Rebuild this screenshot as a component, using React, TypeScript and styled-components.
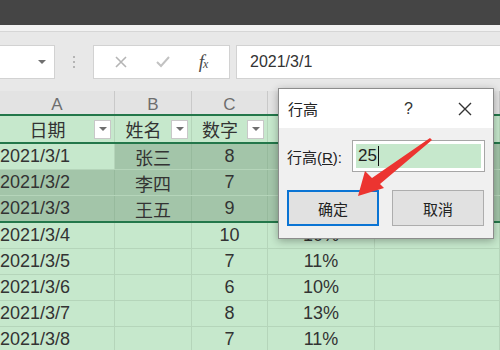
import styled, { createGlobalStyle } from 'styled-components';

const GlobalStyle = createGlobalStyle`
  html, body {
    margin: 0;
    padding: 0;
    width: 500px;
    height: 350px;
    overflow: hidden;
    background: #c6e8cc;
    font-family: "Liberation Sans", "Noto Sans CJK SC", sans-serif;
  }
`;

const Page = styled.div`
  position: relative;
  width: 500px;
  height: 350px;
  overflow: hidden;
  display: flex;
  flex-direction: column;
`;

const TopBar = styled.div`
  height: 25px;
  background: #454545;
  flex-shrink: 0;
`;

const Strip = styled.div`
  height: 6px;
  background: #f2f2f2;
  border-bottom: 1px solid #d6d6d6;
  flex-shrink: 0;
`;

const FormulaBar = styled.div`
  height: 59px;
  background: #e8e8e8;
  display: flex;
  align-items: center;
  flex-shrink: 0;
`;

const NameBox = styled.div`
  width: 55px;
  height: 34px;
  box-sizing: border-box;
  background: #fff;
  border: 1px solid #d2d2d2;
  border-left: none;
  display: flex;
  align-items: center;
  justify-content: flex-end;
  padding-right: 8px;
`;

const Caret = styled.span`
  width: 0;
  height: 0;
  border-left: 4px solid transparent;
  border-right: 4px solid transparent;
  border-top: 4px solid #6f6f6f;
`;

const Dots = styled.div`
  width: 38px;
  display: flex;
  flex-direction: column;
  align-items: center;
  gap: 3px;
  span {
    width: 2px;
    height: 2px;
    background: #b4b4b4;
  }
`;

const FuncBox = styled.div`
  width: 137px;
  height: 34px;
  box-sizing: border-box;
  background: #fff;
  border: 1px solid #d2d2d2;
  display: flex;
  align-items: center;
  justify-content: space-around;
  padding: 0 8px 0 6px;
`;

const Fx = styled.span`
  font-family: "Liberation Serif", serif;
  font-style: italic;
  font-size: 19px;
  color: #4a4a4a;
  letter-spacing: -1px;
  sub {
    font-size: 12px;
    vertical-align: baseline;
  }
`;

const FormulaInput = styled.div`
  flex: 1;
  margin-left: 6px;
  height: 34px;
  box-sizing: border-box;
  background: #fff;
  border: 1px solid #d2d2d2;
  border-right: none;
  display: flex;
  align-items: center;
  padding-left: 13px;
  font-size: 16px;
  color: #333;
`;

const COLS = '115px 77px 76px 107px 1fr';

const ColHeaders = styled.div`
  display: grid;
  grid-template-columns: ${COLS};
  height: 23px;
  background: #e3e3e3;
  flex-shrink: 0;
`;

const ColLetter = styled.div`
  border-right: 1px solid #c9c9c9;
  display: flex;
  align-items: center;
  justify-content: center;
  font-size: 17px;
  color: #6e6e6e;
  padding-top: 4px;
  overflow: hidden;
`;

const Row = styled.div<{ $h: number; $top?: boolean; $bottom?: boolean }>`
  display: grid;
  grid-template-columns: ${COLS};
  height: ${(p) => p.$h}px;
  flex-shrink: 0;
  box-sizing: content-box;
  border-top: ${(p) => (p.$top ? '2px solid #23774a' : 'none')};
  border-bottom: ${(p) => (p.$bottom ? '2px solid #23774a' : '1px solid #b5d5ba')};
`;

const Cell = styled.div<{ $sel?: boolean; $align?: string }>`
  background: ${(p) => (p.$sel ? '#a3c5a9' : '#c6e8cc')};
  border-right: 1px solid ${(p) => (p.$sel ? '#97ba9d' : '#b5d5ba')};
  display: flex;
  align-items: center;
  justify-content: ${(p) => p.$align || 'center'};
  font-size: 18px;
  color: #333;
  white-space: nowrap;
  overflow: hidden;
  position: relative;
`;

const HeadCell = styled(Cell)`
  justify-content: flex-start;
`;

const HeadLabel = styled.span`
  flex: 1;
  text-align: center;
  padding-left: 1px;
`;

const FilterBtn = styled.span`
  width: 17px;
  height: 19px;
  box-sizing: border-box;
  margin-right: 3px;
  background: #fff;
  border: 1px solid #c8c8c8;
  display: flex;
  align-items: center;
  justify-content: center;
`;

const Dialog = styled.div`
  position: absolute;
  left: 278px;
  top: 88px;
  width: 216px;
  height: 151px;
  box-sizing: border-box;
  border: 1px solid #8c8c8c;
  background: #f0f0f0;
  box-shadow: 0 2px 8px rgba(0, 0, 0, 0.3);
  display: flex;
  flex-direction: column;
`;

const DialogTitle = styled.div`
  height: 39px;
  background: #fff;
  display: flex;
  align-items: center;
  padding-left: 9px;
  font-size: 15px;
  color: #222;
`;

const TitleIcon = styled.span<{ $ml: number }>`
  margin-left: ${(p) => p.$ml}px;
  font-size: 16px;
  color: #333;
  display: flex;
  align-items: center;
`;

const DialogBody = styled.div`
  padding: 12px 0 0 8px;
  display: flex;
  flex-direction: column;
`;

const FieldRow = styled.div`
  display: flex;
  align-items: center;
  gap: 10px;
`;

const Label = styled.span`
  font-size: 15px;
  color: #222;
  white-space: nowrap;
  flex-shrink: 0;
  u {
    text-decoration: underline;
  }
`;

const Input = styled.div`
  width: 133px;
  height: 32px;
  box-sizing: border-box;
  border: 1px solid #a6a6a6;
  background: #fff;
  padding: 3px;
  display: flex;
  flex-shrink: 0;
`;

const InputFill = styled.div`
  flex: 1;
  background: #c6e8cc;
  display: flex;
  align-items: center;
  padding-left: 2px;
  font-size: 17px;
  color: #222;
  i {
    width: 1px;
    height: 20px;
    background: #111;
    margin-left: 1px;
  }
`;

const Buttons = styled.div`
  display: flex;
  gap: 13px;
  margin-top: 18px;
`;

const Button = styled.div<{ $primary?: boolean }>`
  width: 92px;
  height: 36px;
  box-sizing: border-box;
  background: #e1e1e1;
  border: ${(p) => (p.$primary ? '2px solid #0a74d4' : '1px solid #adadad')};
  display: flex;
  align-items: center;
  justify-content: center;
  font-size: 15px;
  color: #222;
`;

const Overlay = styled.svg`
  position: absolute;
  left: 0;
  top: 0;
  pointer-events: none;
`;

type RowData = { date: string; name: string; num: string; pct: string; sel?: boolean };

// column D of the first rows sits under the dialog, so it stays empty
const rows: RowData[] = [
  { date: '2021/3/1', name: '张三', num: '8', pct: '', sel: true },
  { date: '2021/3/2', name: '李四', num: '7', pct: '', sel: true },
  { date: '2021/3/3', name: '王五', num: '9', pct: '', sel: true },
  { date: '2021/3/4', name: '', num: '10', pct: '10%' },
  { date: '2021/3/5', name: '', num: '7', pct: '11%' },
  { date: '2021/3/6', name: '', num: '6', pct: '10%' },
  { date: '2021/3/7', name: '', num: '8', pct: '13%' },
  { date: '2021/3/8', name: '', num: '7', pct: '11%' },
];

function Filter() {
  return (
    <FilterBtn>
      <Caret />
    </FilterBtn>
  );
}

export default function App() {
  return (
    <Page>
      <GlobalStyle />
      <TopBar />
      <Strip />
      <FormulaBar>
        <NameBox>
          <Caret />
        </NameBox>
        <Dots>
          <span />
          <span />
          <span />
        </Dots>
        <FuncBox>
          <svg width="14" height="14" viewBox="0 0 14 14">
            <path d="M2 2 L12 12 M12 2 L2 12" stroke="#b5b5b5" strokeWidth="1.6" fill="none" />
          </svg>
          <svg width="16" height="14" viewBox="0 0 16 14">
            <path d="M2 7 L6 11 L14 2" stroke="#c2c2c2" strokeWidth="2" fill="none" />
          </svg>
          <Fx>
            f<sub>x</sub>
          </Fx>
        </FuncBox>
        <FormulaInput>2021/3/1</FormulaInput>
      </FormulaBar>

      <ColHeaders>
        <ColLetter>A</ColLetter>
        <ColLetter>B</ColLetter>
        <ColLetter>C</ColLetter>
        <ColLetter />
        <ColLetter />
      </ColHeaders>

      <Row $h={26} $top $bottom>
        <HeadCell>
          <HeadLabel>日期</HeadLabel>
          <Filter />
        </HeadCell>
        <HeadCell>
          <HeadLabel>姓名</HeadLabel>
          <Filter />
        </HeadCell>
        <HeadCell>
          <HeadLabel>数字</HeadLabel>
          <Filter />
        </HeadCell>
        <Cell />
        <Cell />
      </Row>

      {rows.map((r, i) => (
        <Row key={r.date} $h={25} $bottom={i === 2}>
          <Cell $sel={r.sel && i > 0} $align="flex-start">
            {r.date}
          </Cell>
          <Cell $sel={r.sel}>{r.name}</Cell>
          <Cell $sel={r.sel}>{r.num}</Cell>
          <Cell $sel={r.sel}>{r.pct}</Cell>
          <Cell $sel={r.sel} />
        </Row>
      ))}

      <Dialog>
        <DialogTitle>
          行高
          <TitleIcon $ml={86}>?</TitleIcon>
          <TitleIcon $ml={44}>
            <svg width="16" height="16" viewBox="0 0 16 16">
              <path d="M2 2 L14 14 M14 2 L2 14" stroke="#333" strokeWidth="1.4" fill="none" />
            </svg>
          </TitleIcon>
        </DialogTitle>
        <DialogBody>
          <FieldRow>
            <Label>
              行高(<u>R</u>):
            </Label>
            <Input>
              <InputFill>
                25<i />
              </InputFill>
            </Input>
          </FieldRow>
          <Buttons>
            <Button $primary>确定</Button>
            <Button>取消</Button>
          </Buttons>
        </DialogBody>
      </Dialog>

      <Overlay width="500" height="350" viewBox="0 0 500 350">
        <polygon
          points="430,138 432,140 380,184 384,188 358,196 365,171 372,178"
          fill="#ec3430"
        />
      </Overlay>
    </Page>
  );
}
